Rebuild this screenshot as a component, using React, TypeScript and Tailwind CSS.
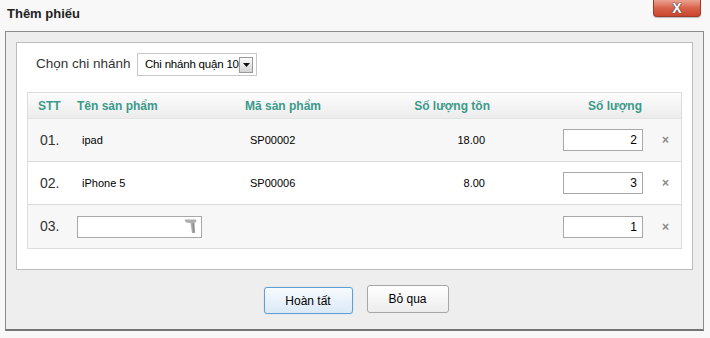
import { useState } from 'react'

const dong = [
  { stt: '01.', ten: 'ipad', ma: 'SP00002', ton: '18.00', sl: '2' },
  { stt: '02.', ten: 'iPhone 5', ma: 'SP00006', ton: '8.00', sl: '3' },
]

const cot = 'grid grid-cols-[49px_168px_85px_160px_153px_1fr] items-center'

function ScannerIcon() {
  return (
    <svg width="13" height="15" viewBox="0 0 13 15" className="absolute right-[4px] top-[2px]">
      <path d="M0.5 0.5 L12 0.5 L12.5 3 L10.5 3.5 L11 14 L8 14 L6.5 4 L2 3.5 Z" fill="#adadad" />
      <path d="M8.5 4 L10 4 L10.5 13.5 L9 13.5 Z" fill="#8c8c8c" />
    </svg>
  )
}

export default function App() {
  const [soLuong, setSoLuong] = useState(['2', '3', '1'])

  function doiSoLuong(i: number, v: string) {
    const moi = [...soLuong]
    moi[i] = v
    setSoLuong(moi)
  }

  return (
    <div className="w-[710px] h-[338px] bg-[#f8f8f8] relative overflow-hidden font-['Liberation_Sans',Arial,sans-serif] text-[#222]">
      <div className="h-[31px] flex items-center pl-[7px]">
        <h1 className="text-[13px] font-bold text-[#222] -mt-[3px]">Thêm phiếu</h1>
      </div>
      <button
        className="absolute top-0 right-[9px] w-[48px] h-[17px] rounded-b-[4px] border border-t-0 border-[#9a3a2a] bg-gradient-to-b from-[#eaa291] via-[#d9624a] to-[#c9452e] flex items-center justify-center shadow-[0_1px_1px_rgba(0,0,0,0.25)]"
        title="Đóng"
      >
        <span className="text-[14px] font-bold text-white leading-none [text-shadow:0_0_1px_#444,0_0_1px_#444,0_0_1px_#444]">X</span>
      </button>

      <div className="ml-[5px] mr-[6px] h-[300px] border border-[#8c8c8c] border-b-2 border-b-[#747474] bg-[#eeeeee] p-[10px] flex flex-col">
        <div className="bg-white border border-[#bcbcbc] px-[10px] pt-[10px] pb-[20px]">
          <div className="flex items-center h-[23px] pl-[9px]">
            <span className="text-[13.5px] text-[#333] w-[101px] whitespace-nowrap">Chọn chi nhánh</span>
            <div className="w-[120px] h-[23px] border border-[#c8c8c8] flex items-center pl-[7px] pr-[3px] overflow-hidden">
              <span className="text-[11.5px] text-black flex-1 whitespace-nowrap tracking-[-0.2px]">Chi nhánh quận 10</span>
              <span className="shrink-0 w-[14px] h-[16px] border border-[#9a9a9a] bg-gradient-to-b from-[#fafafa] to-[#d4d4d4] flex items-center justify-center">
                <svg width="7" height="4" viewBox="0 0 7 4"><path d="M0 0 H7 L3.5 4 Z" fill="#111" /></svg>
              </span>
            </div>
          </div>

          <div className="mt-[16px] border border-[#dcdcdc]">
            <div className={`${cot} h-[26px] bg-gradient-to-b from-[#fdfdfd] to-[#ececec] text-[12px] font-bold text-[#3b9a8b] border-b border-[#e4e4e4]`}>
              <span className="pl-[10px]">STT</span>
              <span>Tên sản phẩm</span>
              <span>Mã sản phẩm</span>
              <span className="text-right">Số lượng tồn</span>
              <span className="text-right pr-[1px]">Số lượng</span>
              <span />
            </div>
            {dong.map((d, i) => (
              <div
                key={d.stt}
                className={`${cot} h-[43px] border-b border-[#dcdcdc] ${i % 2 === 0 ? 'bg-[#f7f7f7]' : 'bg-white'}`}
              >
                <span className="pl-[12px] text-[14px] text-[#333]">{d.stt}</span>
                <span className="pl-[5px] text-[11px] text-black">{d.ten}</span>
                <span className="pl-[5px] text-[11px] text-black">{d.ma}</span>
                <span className="text-right pr-[5px] text-[11px] text-black">{d.ton}</span>
                <div className="flex justify-end">
                  <input
                    value={soLuong[i]}
                    onChange={(e) => doiSoLuong(i, e.target.value)}
                    className="w-[80px] h-[22px] border border-[#a8a8a8] bg-white text-right pr-[5px] text-[12px] text-black outline-none"
                  />
                </div>
                <span className="pl-[19px] text-[12px] font-bold text-[#8a8a8a]">×</span>
              </div>
            ))}
            <div className={`${cot} h-[43px] bg-[#f7f7f7]`}>
              <span className="pl-[12px] text-[14px] text-[#333]">03.</span>
              <div className="relative w-[125px] h-[22px] border border-[#a8a8a8] bg-white">
                <ScannerIcon />
              </div>
              <span />
              <span />
              <div className="flex justify-end">
                <input
                  value={soLuong[2]}
                  onChange={(e) => doiSoLuong(2, e.target.value)}
                  className="w-[80px] h-[22px] border border-[#a8a8a8] bg-white text-right pr-[5px] text-[12px] text-black outline-none"
                />
              </div>
              <span className="pl-[19px] text-[12px] font-bold text-[#8a8a8a]">×</span>
            </div>
          </div>
        </div>

        <div className="flex justify-center items-start gap-[14px] pt-[15px] pl-[3px]">
          <button className="mt-[2px] w-[89px] h-[27px] rounded-[3px] border border-[#5f9fd3] bg-gradient-to-b from-[#f7fbfe] to-[#dbe9f6] text-[12px] text-black shadow-[0_0_1px_#8fc0ea]">
            Hoàn tất
          </button>
          <button className="w-[82px] h-[28px] rounded-[3px] border border-[#a6a6a6] bg-gradient-to-b from-[#ffffff] to-[#ececec] text-[12px] text-black">
            Bỏ qua
          </button>
        </div>
      </div>
    </div>
  )
}
